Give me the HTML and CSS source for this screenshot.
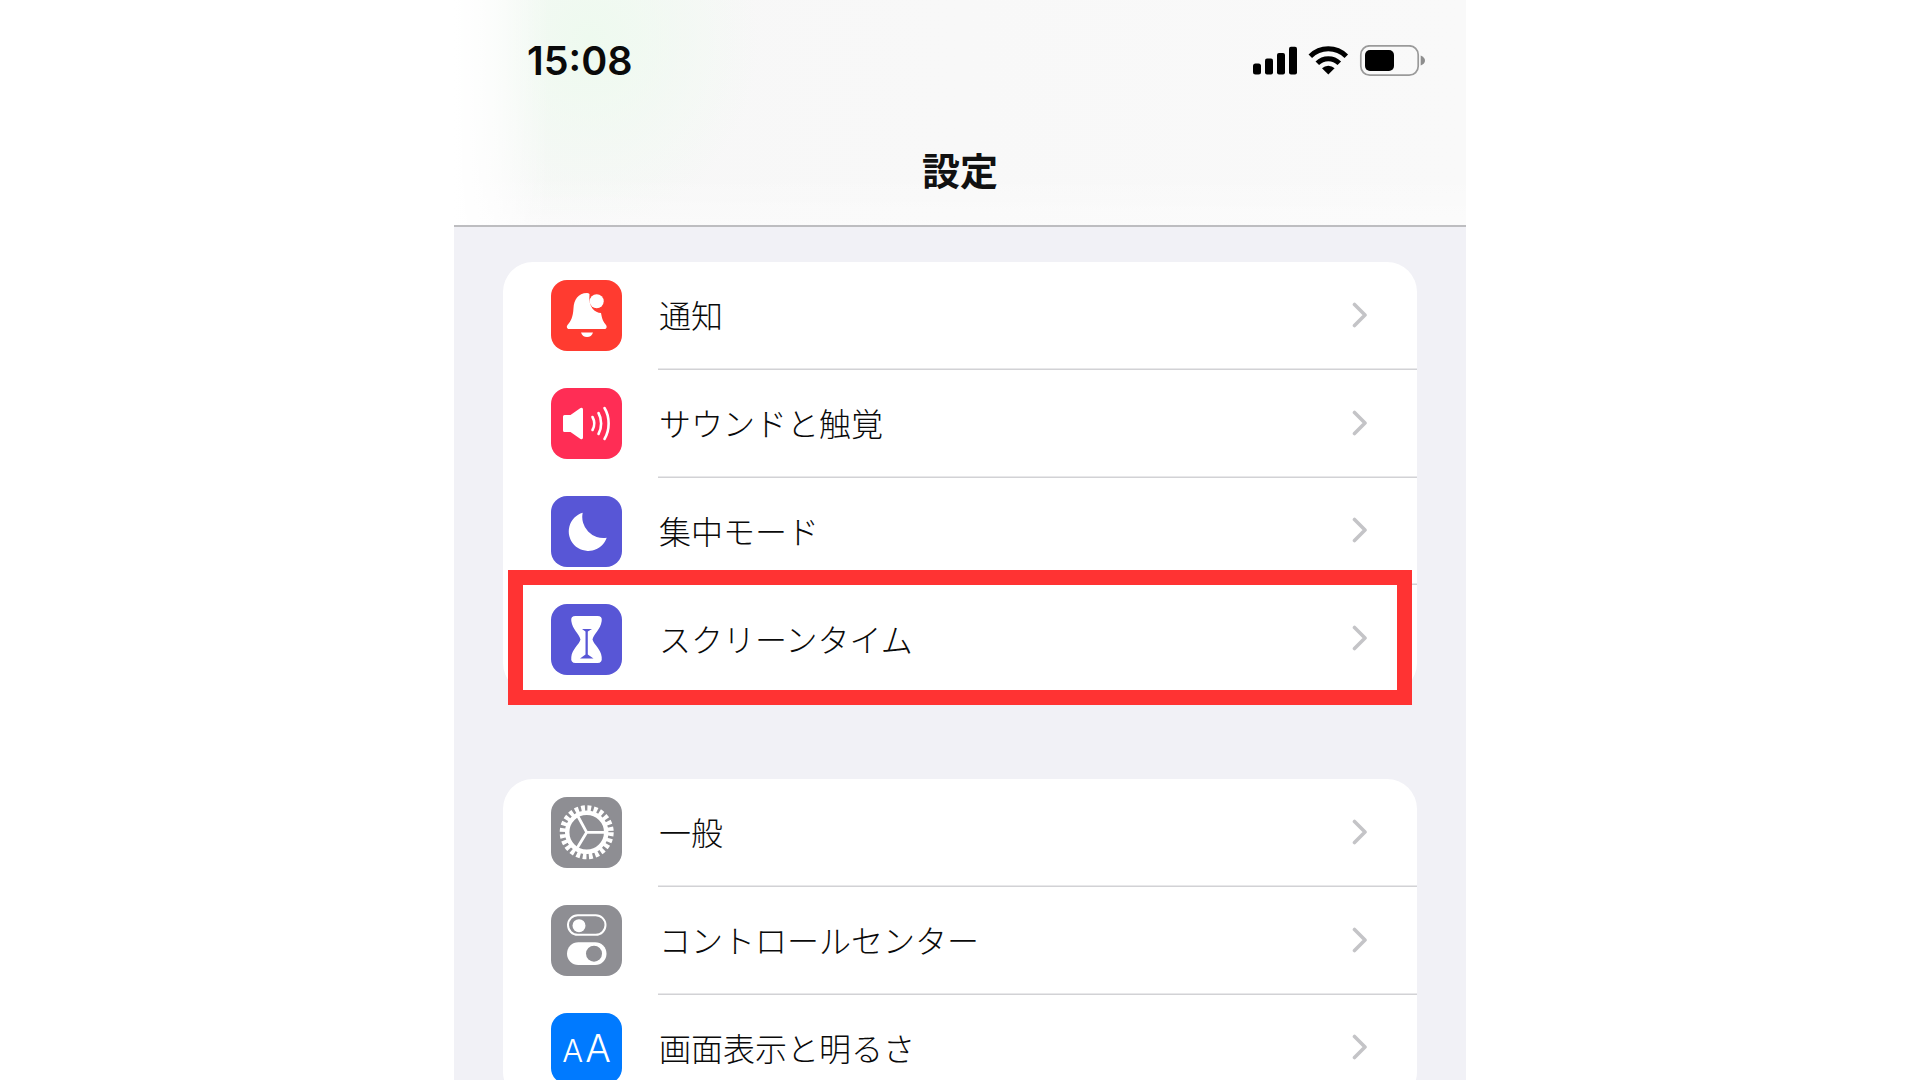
FILE: index.html
```html
<!DOCTYPE html>
<html lang="ja">
<head>
<meta charset="utf-8">
<title>設定</title>
<link rel="stylesheet" href="styles.css">
</head>
<body>
<main class="phone">
  <header class="nav">
    <div class="status">
      <span class="time">15:08</span>
      <svg class="status-icons" width="174" height="32" viewBox="0 0 174 32">
        <rect x="1" y="18.5" width="8" height="11" rx="2.5"/>
        <rect x="13" y="13.5" width="8" height="16" rx="2"/>
        <rect x="25" y="8" width="8" height="21.5" rx="2"/>
        <rect x="37" y="1.8" width="8" height="27.7" rx="2"/>
        <path d="M58.3 11.3A25.5 25.5 0 0 1 94.3 11.3M65.3 18.3A15.5 15.5 0 0 1 87.3 18.3" fill="none" stroke="#000" stroke-width="5"/>
        <path d="M76.3 29.5L70 23.2A9 9 0 0 1 82.6 23.2Z"/>
        <rect x="108.8" y="0.8" width="57.4" height="29.4" rx="9" fill="none" stroke="#9a9a9a" stroke-width="1.7"/>
        <rect x="113" y="5" width="29" height="21" rx="5"/>
        <path d="M168.7 10.5C171.5 11.5 173 13.5 173 15.5S171.5 19.5 168.7 20.5Z" fill="#8e8e8e"/>
      </svg>
    </div>
    <h1 class="title">設定</h1>
  </header>

  <section class="card">
    <div class="row">
      <span class="icon red">
        <svg viewBox="0 0 71 71"><path d="M36 13C27 13 23 20 22.500 28C22 37 20 41 16.500 45C15.200 46.600 16 49 18 49H53.500C55.500 49 56.400 46.800 55 45C52.500 42 51 39 50 33C44 33 37 27 38.500 14C37.800 13.400 37 13 36 13Z" fill="#fff"/><path d="M30 52.500H42C41 55.500 39 57 36 57S31 55.500 30 52.500Z" fill="#fff"/><circle cx="45.700" cy="21.300" r="7" fill="#fff"/></svg>
      </span>
      <div class="row-body"><span class="label">通知</span><svg class="chev" width="16" height="26" viewBox="0 0 16 26"><path d="M2.500 2.500L13 13L2.500 23.500"/></svg></div>
    </div>
    <div class="row">
      <span class="icon pink">
        <svg viewBox="0 0 71 71"><path d="M12 28.500Q12 27 13.500 27H19.500L29.500 20Q32 19 32 21.500V49.500Q32 52 29.500 51L19.500 44H13.500Q12 44 12 42.500Z" fill="#fff"/><g class="wave"><path d="M41.500 29C43.700 33 43.700 38 41.500 42"/><path d="M47.500 25C51 31 51 40 47.500 46"/><path d="M53.500 20C59 29 59 42 53.500 51"/></g></svg>
      </span>
      <div class="row-body"><span class="label">サウンドと触覚</span><svg class="chev" width="16" height="26" viewBox="0 0 16 26"><path d="M2.500 2.500L13 13L2.500 23.500"/></svg></div>
    </div>
    <div class="row">
      <span class="icon indigo">
        <svg viewBox="0 0 71 71"><path d="M31.700 16.700A19.500 19.500 0 1 0 55.700 41.700A21 21 0 0 1 31.700 16.700Z" fill="#fff"/></svg>
      </span>
      <div class="row-body"><span class="label">集中モード</span><svg class="chev" width="16" height="26" viewBox="0 0 16 26"><path d="M2.500 2.500L13 13L2.500 23.500"/></svg></div>
    </div>
    <div class="row">
      <span class="icon indigo">
        <svg viewBox="0 0 71 71"><path d="M24.500 12H46.500Q51.500 12 50.700 17C49.500 26 43 29 41.500 35.500C43 41 50 45 50.700 53Q51.500 59 46.500 59H24.500Q19.500 59 20.300 53C21 45 28 41 29.500 35.500C28 29 21.500 26 20.300 17Q19.500 12 24.500 12Z" fill="#fff"/><path d="M31 25H41L36.800 27.500V50.500L42.500 54.500H29L34.500 50.500V27.500Z" fill="#5856d6"/></svg>
      </span>
      <div class="row-body last"><span class="label">スクリーンタイム</span><svg class="chev" width="16" height="26" viewBox="0 0 16 26"><path d="M2.500 2.500L13 13L2.500 23.500"/></svg></div>
    </div>
  </section>

  <section class="card">
    <div class="row">
      <span class="icon gray">
        <svg viewBox="0 0 71 71"><circle cx="35.700" cy="35.300" r="23.500" fill="none" stroke="#fff" stroke-width="7" stroke-dasharray="3.700 2.452"/><circle cx="35.700" cy="35.300" r="19.500" fill="none" stroke="#fff" stroke-width="4.500"/><path d="M35.700 35.300H54M35.700 35.300L26.500 18.500M35.700 35.300L26.500 50.500" fill="none" stroke="#fff" stroke-width="2.800"/></svg>
      </span>
      <div class="row-body"><span class="label">一般</span><svg class="chev" width="16" height="26" viewBox="0 0 16 26"><path d="M2.500 2.500L13 13L2.500 23.500"/></svg></div>
    </div>
    <div class="row">
      <span class="icon gray">
        <svg viewBox="0 0 71 71"><rect x="17" y="10.300" width="37.500" height="19.500" rx="9.750" fill="none" stroke="#fff" stroke-width="2"/><circle cx="28" cy="20.700" r="6.500" fill="#fff"/><rect x="16" y="37.300" width="39.500" height="22.700" rx="11.350" fill="#fff"/><circle cx="43" cy="48.700" r="8" fill="#8e8e93"/></svg>
      </span>
      <div class="row-body"><span class="label">コントロールセンター</span><svg class="chev" width="16" height="26" viewBox="0 0 16 26"><path d="M2.500 2.500L13 13L2.500 23.500"/></svg></div>
    </div>
    <div class="row">
      <span class="icon blue"><span class="aa"><span class="aa-small">A</span><span class="aa-big">A</span></span></span>
      <div class="row-body last"><span class="label">画面表示と明るさ</span><svg class="chev" width="16" height="26" viewBox="0 0 16 26"><path d="M2.500 2.500L13 13L2.500 23.500"/></svg></div>
    </div>
  </section>

  <div class="highlight"></div>
</main>
</body>
</html>
```
FILE: styles.css
```css
* { box-sizing: border-box; }
html, body { margin: 0; height: 1080px; overflow: hidden; background: #fff; }
body { display: flex; justify-content: center; font-family: "Noto Sans CJK JP", "Noto Sans", sans-serif; }

.phone {
  position: relative;
  width: 1012px;
  height: 1080px;
  overflow: hidden;
  background: #f1f1f6;
}

.nav {
  height: 227px;
  border-bottom: 2px solid #bdbdc0;
  background:
    linear-gradient(90deg, #fff, rgba(255,255,255,.7) 40px, rgba(255,255,255,0) 95px),
    linear-gradient(0deg, rgba(255,255,255,.4), rgba(255,255,255,0) 50px),
    radial-gradient(ellipse 170px 190px at 135px 40px, #eefaef, rgba(238,250,239,0)),
    linear-gradient(90deg, #f7f7f7, #f9f9f9);
}

.status {
  display: flex;
  justify-content: space-between;
  align-items: flex-start;
  padding: 45px 40px 0 73px;
  height: 142px;
}
.time {
  font-family: Inter, "Liberation Sans", sans-serif;
  font-weight: 600;
  font-size: 39.500px;
  line-height: 32px;
  color: #0a0a0a;
}
.status-icons { display: block; }

.title {
  margin: 0;
  text-align: center;
  font-size: 38px;
  font-weight: 700;
  line-height: 54px;
  color: #111;
}

.card {
  margin: 35px 49px 86px;
  background: #fff;
  border-radius: 30px;
  overflow: hidden;
}

.row {
  display: flex;
  align-items: center;
  height: 107.750px;
  padding-left: 48px;
}

.icon {
  flex: none;
  display: flex;
  align-items: center;
  justify-content: center;
  width: 71px;
  height: 71px;
  border-radius: 16px;
}
.icon svg { display: block; width: 71px; height: 71px; }
.red { background: #ff3b30; }
.pink { background: #ff2d55; }
.indigo { background: #5856d6; }
.gray { background: #8e8e93; }
.blue { background: #007aff; }

.wave path { fill: none; stroke: #fff; stroke-width: 2.600; stroke-linecap: round; }

.aa {
  display: flex;
  align-items: baseline;
  gap: 2px;
  padding-bottom: 1px;
  font-family: Inter, "Liberation Sans", sans-serif;
  font-weight: 300;
  color: #fff;
  line-height: 1;
}
.aa-small { font-size: 31px; }
.aa-big { font-size: 38px; }

.row-body {
  flex: 1;
  align-self: stretch;
  display: flex;
  align-items: center;
  justify-content: space-between;
  margin-left: 36px;
  padding: 0 49px 2px 0;
  box-shadow: inset 0 -1.500px 0 #d2d2d5;
}
.row-body.last { box-shadow: none; }

.label {
  padding: 0 0 1px 1px;
  font-size: 32px;
  font-weight: 300;
  color: #0a0a0a;
}

.chev { flex: none; }
.chev path { fill: none; stroke: #c4c4c7; stroke-width: 3.600; stroke-linecap: round; stroke-linejoin: round; }

.highlight {
  position: absolute;
  left: 54px;
  top: 570px;
  width: 904px;
  height: 135px;
  border: 15px solid #ff3333;
}
```
